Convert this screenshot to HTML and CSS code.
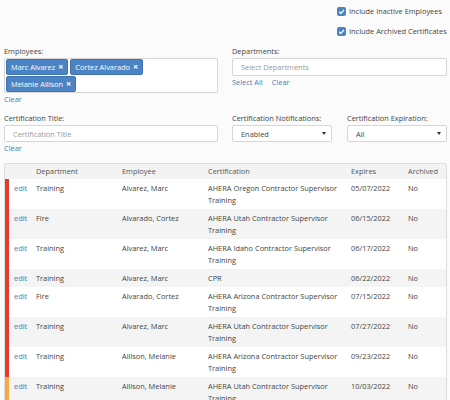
FILE: index.html
```html
<!DOCTYPE html>
<html lang="en">
<head>
  <meta charset="UTF-8">
  <title>Certifications Report</title>
  <link rel="stylesheet" href="styles.css">
</head>
<body>
  <div class="options">
    <label class="check"><span class="box"><svg viewBox="0 0 10 10"><path d="M2.3 5.2l1.9 1.9 3.6-3.8" /></svg></span>Include Inactive Employees</label>
    <label class="check"><span class="box"><svg viewBox="0 0 10 10"><path d="M2.3 5.2l1.9 1.9 3.6-3.8" /></svg></span>Include Archived Certificates</label>
  </div>

  <div class="filters">
    <div class="field">
      <div class="label">Employees:</div>
      <div class="tags">
        <span class="tag">Marc Alvarez <b>&times;</b></span>
        <span class="tag">Cortez Alvarado <b>&times;</b></span>
        <span class="tag">Melanie Allison <b>&times;</b></span>
      </div>
      <div class="links"><a href="#">Clear</a></div>
    </div>
    <div class="field">
      <div class="label">Departments:</div>
      <input class="input" type="text" placeholder="Select Departments">
      <div class="links"><a href="#">Select All</a><a href="#">Clear</a></div>
    </div>

    <div class="field">
      <div class="label">Certification Title:</div>
      <input class="input short" type="text" placeholder="Certification Title">
      <div class="links"><a href="#">Clear</a></div>
    </div>
    <div class="field pair">
      <div>
        <div class="label">Certification Notifications:</div>
        <div class="select"><select><option>Enabled</option></select></div>
      </div>
      <div>
        <div class="label">Certification Expiration:</div>
        <div class="select"><select><option>All</option></select></div>
      </div>
    </div>
  </div>

  <div class="grid">
    <table class="head">
      <colgroup><col class="c-bar"><col class="c-edit"><col class="c-dept"><col class="c-emp"><col class="c-cert"><col class="c-exp"><col></colgroup>
      <tr><td></td><td></td><td>Department</td><td>Employee</td><td>Certification</td><td>Expires</td><td>Archived</td></tr>
    </table>
    <div class="scroll">
      <table class="rows">
        <colgroup><col class="c-bar"><col class="c-edit"><col class="c-dept"><col class="c-emp"><col class="c-cert"><col class="c-exp"><col></colgroup>
        <tbody id="cert-rows"></tbody>
      </table>
    </div>
  </div>

  <script>
    const certs = [
      ['red', 'Training', 'Alvarez, Marc', 'AHERA Oregon Contractor Supervisor Training', '05/07/2022'],
      ['red', 'Fire', 'Alvarado, Cortez', 'AHERA Utah Contractor Supervisor Training', '06/15/2022'],
      ['red', 'Training', 'Alvarez, Marc', 'AHERA Idaho Contractor Supervisor Training', '06/17/2022'],
      ['red', 'Training', 'Alvarez, Marc', 'CPR', '06/22/2022'],
      ['red', 'Fire', 'Alvarado, Cortez', 'AHERA Arizona Contractor Supervisor Training', '07/15/2022'],
      ['red', 'Training', 'Alvarez, Marc', 'AHERA Utah Contractor Supervisor Training', '07/27/2022'],
      ['red', 'Training', 'Allison, Melanie', 'AHERA Arizona Contractor Supervisor Training', '09/23/2022'],
      ['orange', 'Training', 'Allison, Melanie', 'AHERA Utah Contractor Supervisor Training', '10/03/2022'],
      ['orange', 'Fire', 'Alvarado, Cortez', 'First Aid', '10/19/2022'],
      ['green', 'Training', 'Allison, Melanie', 'AHERA Idaho Contractor Supervisor Training', '01/12/2023'],
      ['green', 'Fire', 'Alvarado, Cortez', 'AHERA Oregon Contractor Supervisor Training', '03/08/2023']
    ];

    const body = document.getElementById('cert-rows');
    certs.forEach(c => {
      const row = document.createElement('tr');
      row.innerHTML = `<td class="bar ${c[0]}"></td><td><a href="#">edit</a></td><td>${c[1]}</td><td>${c[2]}</td><td>${c[3]}</td><td>${c[4]}</td><td>No</td>`;
      body.appendChild(row);
    });
  </script>
</body>
</html>
```

FILE: styles.css
```css
body {
  font-family: "Open Sans", sans-serif;
  font-size: 7.4px;
  line-height: 12px;
  color: #444;
  background-color: #fbfbfb;
  margin: 0;
  padding: 0 3px 0 4px;
}
a {
  color: #4a7bb9;
  text-decoration: none;
}
.options {
  display: flex;
  flex-direction: column;
  gap: 8px;
  width: 110px;
  margin-left: auto;
  padding-top: 5px;
  margin-bottom: 8px;
}
.check {
  display: flex;
  align-items: center;
  height: 12px;
  color: #444;
}
.box {
  width: 9px;
  height: 9px;
  margin-right: 3px;
  border-radius: 2px;
  background-color: #4a82c3;
  display: flex;
}
.box svg {
  width: 9px;
  height: 9px;
  fill: none;
  stroke: white;
  stroke-width: 1.4;
}
.filters {
  display: grid;
  grid-template-columns: 214px 215px;
  column-gap: 14px;
  row-gap: 7px;
}
.label {
  margin-bottom: 1px;
}
.tags {
  height: 33px;
  padding: 0 60px 0 1px;
  border: 1px solid #d6d6d6;
  border-radius: 2px;
  background-color: white;
  display: flex;
  flex-wrap: wrap;
  align-content: flex-start;
  gap: 1px 2px;
}
.tag {
  height: 14px;
  line-height: 14px;
  padding: 0 4px;
  border: 1px solid #3f72b0;
  border-radius: 2px;
  background-color: #4b84c4;
  color: white;
}
.tag b {
  font-size: 9px;
  margin-left: 1px;
}
.input {
  display: block;
  box-sizing: border-box;
  width: 100%;
  height: 18px;
  padding: 0 8px;
  border: 1px solid #d6d6d6;
  border-radius: 2px;
  background-color: white;
  font: inherit;
  color: #444;
}
.input.short {
  height: 17px;
}
.input::placeholder {
  color: #999;
}
.links {
  display: flex;
  gap: 9px;
}
.pair {
  display: flex;
  gap: 15px;
}
.pair > div {
  width: 100px;
}
.label + .select {
  margin-top: 1px;
}
.select {
  position: relative;
}
.select select {
  appearance: none;
  display: block;
  width: 100%;
  height: 17px;
  padding: 0 8px;
  border: 1px solid #d6d6d6;
  border-radius: 2px;
  background-color: white;
  font: inherit;
  color: #444;
}
.select::after {
  content: "";
  position: absolute;
  right: 6px;
  top: 7px;
  border-left: 2.5px solid transparent;
  border-right: 2.5px solid transparent;
  border-top: 3px solid #333;
}
.grid {
  margin-top: 9px;
  border: 1px solid #ddd;
  border-radius: 2px;
  background-color: white;
}
table {
  width: 100%;
  border-collapse: collapse;
  table-layout: fixed;
}
td {
  padding: 3px 5px;
  vertical-align: top;
}
.c-bar { width: 4px; }
.c-edit { width: 22px; }
.c-dept { width: 86px; }
.c-emp { width: 86px; }
.c-cert { width: 143px; }
.c-exp { width: 57px; }
.head {
  background-color: #f3f3f3;
  color: #555;
}
.head td {
  padding: 0 5px;
  height: 15px;
  line-height: 15px;
}
.head td:first-child,
.bar {
  padding: 0;
}
.scroll {
  height: 300px;
  overflow-y: scroll;
}
.scroll::-webkit-scrollbar {
  width: 5px;
}
.scroll::-webkit-scrollbar-track {
  background: transparent;
  margin: 2px 0;
}
.scroll::-webkit-scrollbar-thumb {
  background-color: #767676;
  border-radius: 3px;
}
.rows tr:nth-child(even) {
  background-color: #f4f4f4;
}
.bar.red {
  background-color: #e63a2c;
}
.bar.orange {
  background-color: #f4a942;
}
.bar.green {
  background-color: #5cb85c;
}
```
